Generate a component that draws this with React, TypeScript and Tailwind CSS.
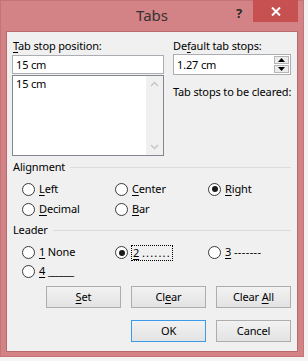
import React from 'react';

const ui = "font-['Segoe_UI','Noto_Sans',sans-serif] text-[11px] tracking-[-0.15px] text-black";

function U({ children }: { children: React.ReactNode }) {
    return <span className="underline underline-offset-2">{children}</span>;
}

function Radio({ checked, children, focus }: { checked?: boolean; children: React.ReactNode; focus?: boolean }) {
    return (
        <div className="flex items-center gap-[4px] h-full whitespace-nowrap">
            <span className="w-[13px] h-[13px] rounded-full border border-[#3a3a3a] bg-white flex items-center justify-center shrink-0">
                {checked && <span className="w-[6px] h-[6px] rounded-full bg-[#1a1a1a]" />}
            </span>
            <span className={focus ? 'outline outline-1 outline-dotted outline-black px-[1px] leading-[14px]' : ''}>{children}</span>
        </div>
    );
}

function GroupLabel({ children }: { children: React.ReactNode }) {
    return (
        <div className="flex items-center h-[16px] pr-[6px]">
            <span>{children}</span>
            <span className="flex-1 h-px bg-[#dcdcdc] ml-[5px]" />
        </div>
    );
}

function Button({ children, primary }: { children: React.ReactNode; primary?: boolean }) {
    return (
        <button
            className={
                'w-[75px] h-[22px] border bg-gradient-to-b from-[#f2f2f2] to-[#e3e3e3] flex items-center justify-center ' +
                (primary ? 'border-[#3c9be9]' : 'border-[#adadad]')
            }
        >
            <span className="whitespace-pre">{children}</span>
        </button>
    );
}

export default function App() {
    return (
        <div className={`w-[308px] h-[361px] bg-[#f4f4f4] ${ui}`}>
            <div className="w-[304px] h-[357px] bg-[#d38285] border border-[#c47477] flex flex-col">
                {/* Title bar */}
                <div className="h-[30px] grid grid-cols-[1fr_auto_1fr]">
                    <div />
                    <div className="text-[15px] tracking-normal text-[#333] pt-[4px] leading-[20px]">Tabs</div>
                    <div className="flex justify-end items-start pr-[5px]">
                        <span className="font-bold text-[13px] text-[#2a2a2a] mt-[4px] mr-[11px] leading-[16px]">?</span>
                        <span className="w-[45px] h-[22px] -mt-px bg-[#c75050] flex items-center justify-center">
                            <svg width="10" height="9" viewBox="0 0 10 9">
                                <path d="M1 0.5L9 8.5M9 0.5L1 8.5" stroke="white" strokeWidth="2" />
                            </svg>
                        </span>
                    </div>
                </div>

                {/* Client area */}
                <div className="mx-[5px] h-[321px] border border-[#b86a6d] bg-[#f0f0f0] flex flex-col">
                    <div className="flex pl-[5px] pt-[6px]">
                        <div className="w-[152px] flex flex-col">
                            <div className="h-[16px] leading-[16px] pl-px">
                                <U>T</U>ab stop position:
                            </div>
                            <div className="mt-[1px] h-[19px] border border-[#abadb3] bg-white pl-[3px] leading-[17px]">15 cm</div>
                            <div className="mt-[1px] h-[81px] border border-[#828790] bg-white flex">
                                <div className="flex-1 pl-[3px] leading-[16px]">15 cm</div>
                                <div className="w-[17px] bg-[#f0f0f0] flex flex-col justify-between items-center py-[5px]">
                                    <svg width="9" height="6" viewBox="0 0 9 6">
                                        <path d="M1 5L4.5 1.5L8 5" stroke="#c6c6c6" strokeWidth="1.5" fill="none" />
                                    </svg>
                                    <svg width="9" height="6" viewBox="0 0 9 6">
                                        <path d="M1 1L4.5 4.5L8 1" stroke="#c6c6c6" strokeWidth="1.5" fill="none" />
                                    </svg>
                                </div>
                            </div>
                        </div>
                        <div className="w-[118px] ml-[9px] flex flex-col whitespace-nowrap">
                            <div className="h-[16px] leading-[16px]">
                                De<U>f</U>ault tab stops:
                            </div>
                            <div className="h-[21px] border border-[#abadb3] bg-white flex">
                                <div className="flex-1 pl-[3px] leading-[19px]">1.27 cm</div>
                                <div className="w-[17px] flex flex-col p-px gap-px">
                                    <div className="flex-1 border border-[#b5b5b5] bg-[#ececec] flex items-center justify-center">
                                        <svg width="7" height="4" viewBox="0 0 7 4">
                                            <path d="M0 4L3.5 0L7 4Z" fill="#000" />
                                        </svg>
                                    </div>
                                    <div className="flex-1 border border-[#b5b5b5] bg-[#ececec] flex items-center justify-center">
                                        <svg width="7" height="4" viewBox="0 0 7 4">
                                            <path d="M0 0L3.5 4L7 0Z" fill="#000" />
                                        </svg>
                                    </div>
                                </div>
                            </div>
                            <div className="mt-[9px] h-[16px] leading-[16px]">Tab stops to be cleared:</div>
                        </div>
                    </div>

                    <div className="mt-[3px] pl-[6px]">
                        <GroupLabel>Alignment</GroupLabel>
                    </div>
                    <div className="mt-[4px] pl-[15px] grid grid-cols-[93px_93px_93px] auto-rows-[20px]">
                        <Radio>
                            <U>L</U>eft
                        </Radio>
                        <Radio>
                            <U>C</U>enter
                        </Radio>
                        <Radio checked>
                            <U>R</U>ight
                        </Radio>
                        <Radio>
                            <U>D</U>ecimal
                        </Radio>
                        <Radio>
                            <U>B</U>ar
                        </Radio>
                    </div>

                    <div className="mt-[3px] pl-[6px]">
                        <GroupLabel>Leader</GroupLabel>
                    </div>
                    <div className="mt-[5px] pl-[15px] grid grid-cols-[93px_93px_93px] auto-rows-[19px]">
                        <Radio>
                            <U>1</U> None
                        </Radio>
                        <Radio checked focus>
                            <U>2</U> <span className="tracking-[1.2px]">.......</span>
                        </Radio>
                        <Radio>
                            <U>3</U> <span className="tracking-[0.4px]">-------</span>
                        </Radio>
                        <Radio>
                            <U>4</U> <span className="tracking-[-0.6px]">______</span>
                        </Radio>
                    </div>

                    <div className="mt-[5px] flex justify-end gap-[10px] pr-[6px]">
                        <Button>
                            <U>S</U>et
                        </Button>
                        <Button>
                            Cl<U>e</U>ar
                        </Button>
                        <Button>
                            Clear <U>A</U>ll
                        </Button>
                    </div>
                    <div className="mt-[12px] flex justify-end gap-[10px] pr-[6px]">
                        <Button primary>OK</Button>
                        <Button>Cancel</Button>
                    </div>
                </div>
            </div>
        </div>
    );
}
